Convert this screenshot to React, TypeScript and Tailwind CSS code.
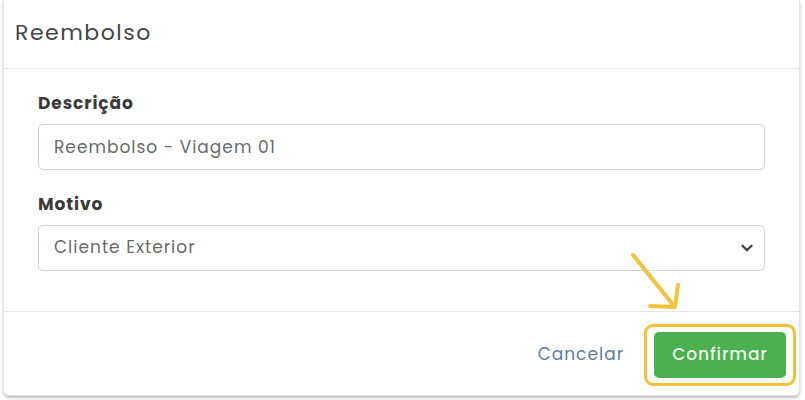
import { ChevronDown } from 'lucide-react'

function Field({ label, children }: { label: string; children: React.ReactNode }) {
  return (
    <div>
      <label className="mb-[11px] block text-[17px] font-bold leading-5 tracking-[0.9px] text-[#3a3a3a]">{label}</label>
      {children}
    </div>
  )
}

export default function App() {
  return (
    <div className="h-[400px] w-[805px] bg-white font-['Poppins','Open_Sans',sans-serif] p-[0_5px_4px_3px]">
      <div className="relative flex h-full flex-col rounded-b-md border border-t-0 border-[#e4e4e4] bg-white shadow-[0_2px_3px_rgba(0,0,0,0.25)]">
        <div className="flex h-[69px] items-center border-b border-[#e6e6e6] px-[11px] pb-[4px]">
          <h2 className="text-[22px] font-normal tracking-[1.5px] text-[#474747]">Reembolso</h2>
        </div>

        <div className="flex flex-col gap-[24px] px-[34px] pb-[40px] pt-[24px]">
          <Field label="Descrição">
            <input
              defaultValue="Reembolso - Viagem 01"
              className="box-border h-[46px] w-full rounded-[5px] border border-[#d2d2d2] px-[15px] text-[17px] tracking-[1px] text-[#6a6a6a] outline-none"
            />
          </Field>
          <Field label="Motivo">
            <div className="flex h-[46px] w-full items-center justify-between rounded-[5px] border border-[#d2d2d2] pl-[15px] pr-[8px]">
              <span className="text-[17px] tracking-[1px] text-[#6a6a6a]">Cliente Exterior</span>
              <ChevronDown size={18} strokeWidth={3.2} className="text-[#444]" />
            </div>
          </Field>
        </div>

        <div className="flex flex-1 items-center justify-end gap-[20px] border-t border-[#e6e6e6] pr-[3px] pt-[3px]">
          <button className="text-[17px] tracking-[1px] text-[#5a7ea5]">Cancelar</button>
          <div className="rounded-[9px] border-[3px] border-[#f4c035] p-[5px_7px]">
            <button className="h-[46px] w-[132px] rounded-[5px] bg-[#4caf50] text-[17px] font-medium tracking-[0.9px] text-[#eefbe9]">
              Confirmar
            </button>
          </div>
        </div>

        <svg
          className="pointer-events-none absolute left-[617px] top-[245px]"
          width="80"
          height="80"
          viewBox="620 245 80 80"
          fill="none"
          stroke="#f5c33b"
          strokeWidth="4"
          strokeLinecap="round"
          strokeLinejoin="round"
        >
          <path d="M632 255 L673 306" />
          <path d="M677 285 L674 307 L649 306" />
        </svg>
      </div>
    </div>
  )
}
